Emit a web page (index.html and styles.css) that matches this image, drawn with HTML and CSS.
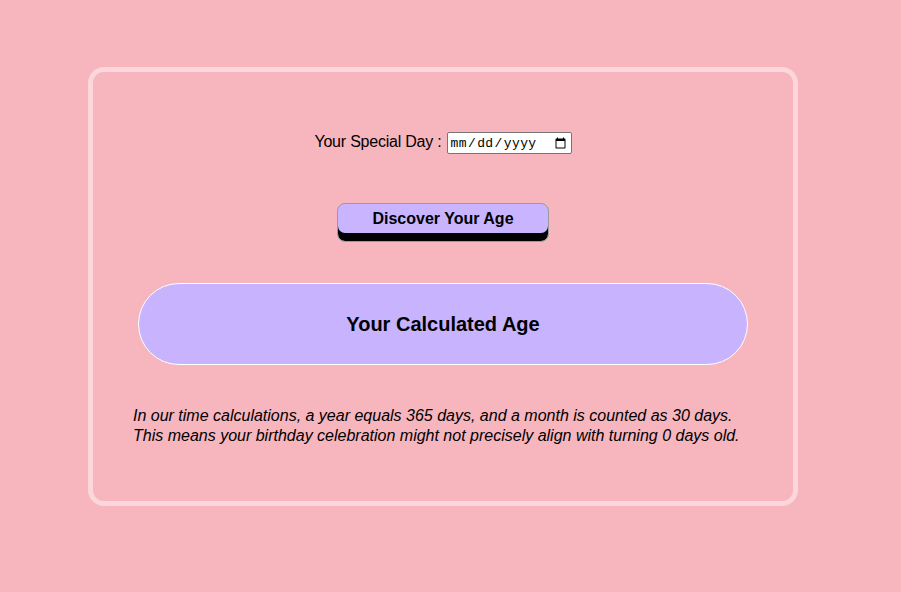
FILE: index.html
```html
<!DOCTYPE html>
<html>
<head>
<meta charset="utf-8">
<link rel="stylesheet" href="styles.css">
</head>
<body>
<div class="card">
  <div class="field">
    <label for="bday">Your Special Day :</label>
    <input type="date" id="bday" class="date">
  </div>
  <div class="action">
    <button class="btn">Discover Your Age</button>
  </div>
  <div class="result">Your Calculated Age</div>
  <p class="note">In our time calculations, a year equals 365 days, and a month is counted as 30 days.<br>This means your birthday celebration might not precisely align with turning 0 days old.</p>
</div>
</body>
</html>
```
FILE: styles.css
```css
html, body {
  margin: 0;
  padding: 0;
  background: #f7b5be;
  font-family: "Liberation Sans", Arial, sans-serif;
  color: #000;
}
.card {
  box-sizing: border-box;
  width: 710px;
  height: 439px;
  margin: 67px 0 0 88px;
  border: 5px solid #fbd6db;
  border-radius: 16px;
  display: flex;
  flex-direction: column;
  align-items: center;
  padding-top: 60px;
}
.field {
  display: flex;
  align-items: center;
  gap: 5px;
  font-size: 16px;
  height: 22px;
}
.field label {
  position: relative;
  top: -1px;
  letter-spacing: -0.22px;
}
.date {
  box-sizing: border-box;
  width: 125px;
  height: 22px;
  font-size: 13px;
  font-family: "Liberation Mono", monospace;
  letter-spacing: 0.4px;
  border: 1px solid #767676;
  border-radius: 2px;
  background: #fff;
  padding: 1px 2px;
  margin: 0;
}
.action {
  margin-top: 49px;
}
.btn {
  box-sizing: border-box;
  width: 212px;
  height: 39px;
  border: 1px solid #9a9a9a;
  border-radius: 8px;
  background: #c8b4ff;
  box-shadow: inset 0 -8px 0 #000;
  font-family: "Liberation Sans", Arial, sans-serif;
  font-weight: bold;
  font-size: 16px;
  padding: 0 0 8px 0;
  color: #000;
}
.result {
  box-sizing: border-box;
  margin-top: 41px;
  width: 610px;
  height: 82px;
  border: 1px solid #fff;
  border-radius: 41px;
  background: #c8b3fe;
  display: flex;
  align-items: center;
  justify-content: center;
  font-weight: bold;
  font-size: 20px;
}
.note {
  box-sizing: border-box;
  width: 620px;
  margin: 41px 0 0 0;
  font-style: italic;
  font-size: 16px;
  line-height: 20px;
}
```
